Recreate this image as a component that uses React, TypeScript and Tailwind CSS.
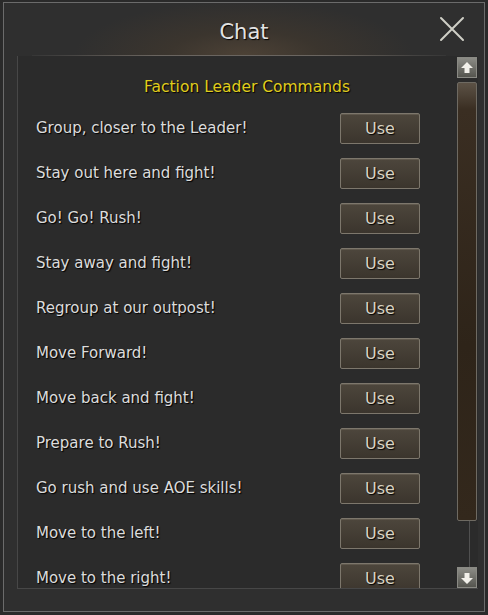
import React from "react";

const rows = [
  "Group, closer to the Leader!",
  "Stay out here and fight!",
  "Go! Go! Rush!",
  "Stay away and fight!",
  "Regroup at our outpost!",
  "Move Forward!",
  "Move back and fight!",
  "Prepare to Rush!",
  "Go rush and use AOE skills!",
  "Move to the left!",
  "Move to the right!",
];

function Arrow({ down }: { down?: boolean }) {
  return (
    <svg width="14" height="14" viewBox="0 0 14 14" style={{ transform: down ? "rotate(180deg)" : undefined }}>
      <path d="M7 1 L13 7 L9.5 7 L9.5 12 L4.5 12 L4.5 7 L1 7 Z" fill="#f2f0ea" />
    </svg>
  );
}

export default function App() {
  return (
    <div
      className="w-[488px] h-[615px] bg-[#2a2a2a] p-[2px_3px_3px_3px] overflow-hidden"
      style={{ fontFamily: '"DejaVu Sans", "Liberation Sans", sans-serif' }}
    >
      <div className="relative w-full h-full border border-[#6b6b6b] bg-[#2f2f2f] flex flex-col">
        {/* header */}
        <div className="relative h-[53px] shrink-0 flex items-center justify-center bg-[radial-gradient(ellipse_170px_55px_at_50%_100%,#4d4236_0%,#3b352e_45%,#2f2f2f_100%)]">
          <span className="text-[21px] text-[#e2e2e2] [text-shadow:1px_1px_1px_#000] mt-[6px]">Chat</span>
          <svg className="absolute right-[19px] top-[13px]" width="26" height="26" viewBox="0 0 26 26">
            <path d="M2 2 L24 24 M24 2 L2 24" stroke="#cfcfc6" strokeWidth="2" strokeLinecap="round" />
          </svg>
          <div className="absolute left-[28px] right-[38px] bottom-0 h-[1px] bg-[linear-gradient(90deg,rgba(120,120,120,0.1),#6a6560_30%,#6a6560_70%,rgba(120,120,120,0.1))]" />
        </div>
        {/* body */}
        <div className="flex-1 flex">
          <div className="ml-[13px] w-[461px] h-[533px] border-l border-b border-[#474747] bg-[#2b2b2b] flex relative">
            <div className="flex-1 flex flex-col pt-[21px] overflow-hidden">
              <div className="h-[29px] shrink-0 pl-[20px] text-center text-[15.5px] leading-[20px] text-[#e0cd1c] [text-shadow:1px_1px_1px_#000]">
                Faction Leader Commands
              </div>
              {rows.map((r) => (
                <div key={r} className="h-[45px] shrink-0 flex items-center pl-[18px] pr-[36px]">
                  <span className="flex-1 text-[15px] text-[#dcdcdc] [text-shadow:1px_1px_1px_#000]">{r}</span>
                  <div className="w-[80px] h-[31px] rounded-[2px] border border-[#7d776c] bg-[linear-gradient(180deg,#4d463c,#3b352d)] shadow-[inset_0_1px_0_#5f584d] flex items-center justify-center text-[16px] text-[#d9d3c3] [text-shadow:1px_1px_1px_#000]">
                    Use
                  </div>
                </div>
              ))}
            </div>
            {/* scrollbar */}
            <div className="w-[21px] mr-[1px] flex flex-col items-center pt-[1px]">
              <div className="w-[20px] h-[21px] border border-[#8a8a84] bg-[linear-gradient(180deg,#8c8c86,#55554f)] flex items-center justify-center">
                <Arrow />
              </div>
              <div className="mt-[4px] w-[20px] h-[439px] rounded-[2px] border border-[#6e6a62] bg-[linear-gradient(180deg,#5c5246_0%,#3a2e22_6%,#2e2419_60%,#33281c_100%)]" />
              <div className="flex-1 w-[1px] bg-[#505050] ml-[6px]" />
              <div className="w-[20px] h-[21px] border border-[#8a8a84] bg-[linear-gradient(180deg,#8c8c86,#55554f)] flex items-center justify-center">
                <Arrow down />
              </div>
            </div>
          </div>
        </div>
      </div>
    </div>
  );
}
